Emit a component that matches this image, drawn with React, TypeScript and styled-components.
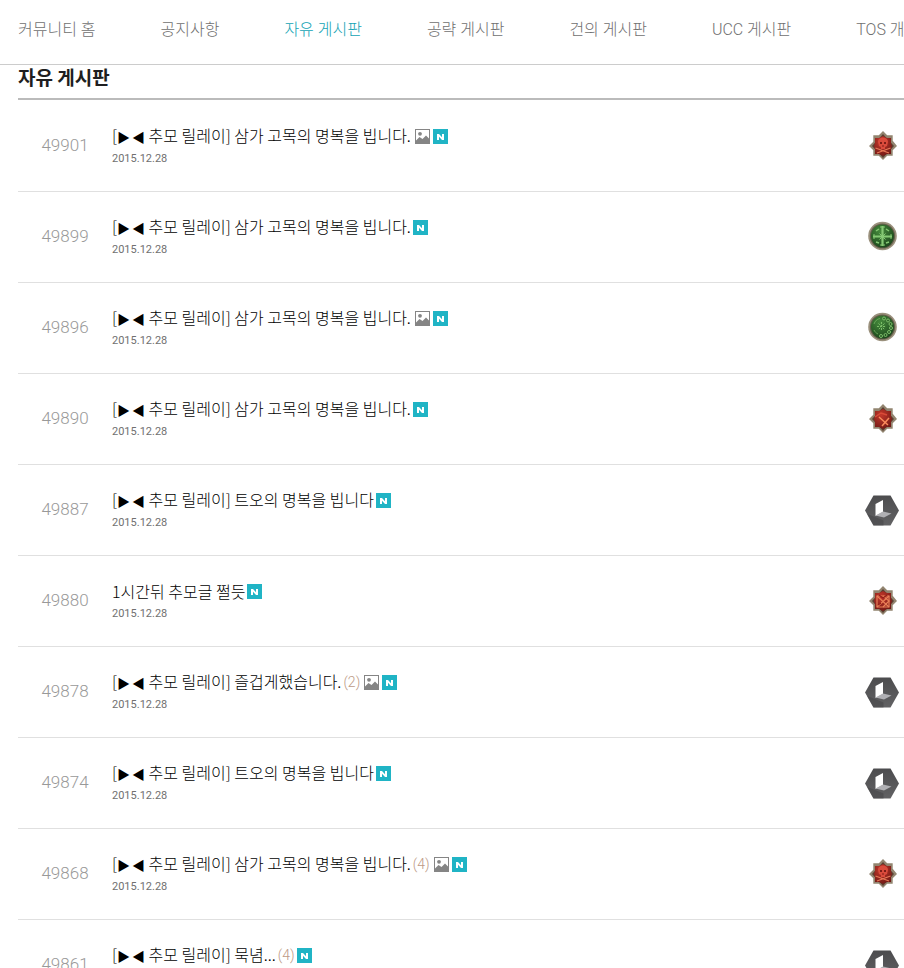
import React from "react";
import styled, { createGlobalStyle } from "styled-components";

const GlobalStyle = createGlobalStyle`
  * { box-sizing: border-box; }
  body {
    margin: 0;
    background: #fff;
    color: #1e1e20;
    font-family: Roboto, "Noto Sans CJK KR", sans-serif;
    overflow-x: hidden;
  }
`;

const korean = `"Noto Sans CJK KR", "Noto Sans", sans-serif`;

const Nav = styled.nav`
  display: flex;
  gap: 65px;
  padding: 18px 0 22px 18px;
  overflow: hidden;
  border-bottom: 1px solid #ccc;
`;

const NavLink = styled.a<{ $active?: boolean }>`
  flex: none;
  font-family: Roboto, ${korean};
  font-size: 16px;
  font-weight: 300;
  line-height: 24px;
  white-space: nowrap;
  text-decoration: none;
  color: ${(p) => (p.$active ? "#12a3b4" : "#707070")};
`;

const Board = styled.main`
  padding-left: 18px;
`;

const BoardTitle = styled.h1`
  margin: 0 0 1px;
  padding-bottom: 9px;
  border-bottom: 2px solid #bbb;
  font-family: ${korean};
  font-size: 19px;
  font-weight: 700;
  line-height: 24px;
`;

const PostList = styled.ul`
  margin: 0;
  padding: 0;
  list-style: none;
`;

const PostRow = styled.li`
  display: flex;
  align-items: center;
  height: 91px;
  padding-right: 5px;
  border-bottom: 1px solid #e0e0e0;
`;

const PostNumber = styled.span`
  flex: none;
  width: 94px;
  padding-bottom: 2px;
  text-align: center;
  font-size: 17px;
  font-weight: 300;
  line-height: 20px;
  color: #999;
`;

const PostBody = styled.div`
  flex: 1;
  min-width: 0;
`;

const TitleLine = styled.div`
  display: flex;
  align-items: center;
  gap: 2px;
  height: 26px;
`;

const PostLink = styled.a`
  font-family: ${korean};
  font-size: 16px;
  font-weight: 300;
  line-height: 26px;
  white-space: nowrap;
  text-decoration: none;
  color: #000;
`;

const Ribbon = styled.span`
  display: inline-flex;
  gap: 2px;
  font-size: 13px;
`;

const ReplyCount = styled.span`
  font-size: 14px;
  font-weight: 300;
  line-height: 24px;
  color: #bd9a86;
`;

const Badges = styled.span<{ $spaced: boolean }>`
  display: flex;
  gap: 3px;
  padding-left: ${(p) => (p.$spaced ? "2px" : "0")};
`;

const PostDate = styled.time`
  display: block;
  font-size: 11px;
  line-height: 20px;
  color: #707070;
`;

const Icon = styled.svg`
  display: block;
  flex: none;
`;

function ImageIcon() {
  return (
    <Icon width="15" height="15" viewBox="0 0 15 15" role="img" aria-label="이미지">
      <rect width="15" height="15" fill="#858585" />
      <path d="M1 1h13v8.5L11 6.5 7.5 10 4.5 8 1 11.5z" fill="#fff" />
      <circle cx="5" cy="4.8" r="1.9" fill="#858585" />
    </Icon>
  );
}

function NewIcon() {
  return (
    <Icon width="15" height="15" viewBox="0 0 15 15" role="img" aria-label="새 글">
      <rect width="15" height="15" fill="#20b4c5" />
      <path d="M4 11V5h2l3 3.3V5h2v6H9L6 7.7V11z" fill="#fff" />
    </Icon>
  );
}

const STAR = "M18 2l4.2 4.3h5.5v5.5L32 17l-4.3 4.2v5.5h-5.5L18 31l-4.2-4.3H8.3v-5.5L4 17l4.3-4.2V6.3h5.5z";

type Emblem = "skull" | "sword" | "lattice" | "cross" | "wreath" | "hex";

function EmblemIcon({ kind }: { kind: Emblem }) {
  if (kind === "hex") {
    return (
      <Icon width="34" height="34" viewBox="0 0 34 34" aria-hidden="true">
        <defs>
          <linearGradient id="stone" x1="0" y1="0" x2="0" y2="1">
            <stop offset="0" stopColor="#4c4c4e" />
            <stop offset="1" stopColor="#626264" />
          </linearGradient>
        </defs>
        <path d="M8.5 2.5h17L34 17.5l-8.5 15h-17L0 17.5z" fill="url(#stone)" />
        <path d="M10 24l8.5 3.5V32.5h-10L2 21z" fill="#424244" opacity=".5" />
        <path d="M10.5 11L18 7v12l-7.5 4z" fill="#fff" />
        <path d="M10.5 22.5l7.5-4 8.5 2-7.5 4z" fill="#b0b0b4" />
      </Icon>
    );
  }
  if (kind === "cross" || kind === "wreath") {
    return (
      <Icon width="34" height="34" viewBox="0 1 34 34" aria-hidden="true">
        <defs>
          <radialGradient id="jade" cx=".4" cy=".3" r=".75">
            <stop offset="0" stopColor="#458a3c" />
            <stop offset="1" stopColor="#1b451b" />
          </radialGradient>
        </defs>
        <circle cx="17.5" cy="17" r="14.3" fill="#9a907c" />
        <circle cx="17.5" cy="17" r="12.6" fill="#665e4c" />
        <circle cx="17.5" cy="17" r="11.5" fill="url(#jade)" />
        {kind === "cross" ? (
          <g fill="none" stroke="#86c975">
            <path d="M17.5 7v20M8 17.5h19" strokeWidth="2.2" />
            <path d="M15 8h5M15 26h5M9 15v5M26 15v5M14.5 14.5l6 6M20.5 14.5l-6 6" />
            <path d="M11 12l3-2M24 12l-3-2M11 23l3 1M24 23l-3 1" strokeWidth="1.5" />
          </g>
        ) : (
          <g fill="none" stroke="#7cbd69">
            <g strokeWidth="1">
              <circle cx="19" cy="8.5" r="1.5" />
              <circle cx="23" cy="10.5" r="1.5" />
              <circle cx="25.5" cy="14" r="1.5" />
              <circle cx="26" cy="18" r="1.5" />
              <circle cx="24" cy="22" r="1.5" />
              <circle cx="20.5" cy="25" r="1.5" />
              <circle cx="16" cy="26" r="1.5" />
            </g>
            <path d="M16.5 12v9M12 16.5h9M13.5 13.5l6 6M19.5 13.5l-6 6" strokeDasharray="2 1" />
            <path d="M9 14c1-3 3-5 6-5.5M9 20c1 2 2 3 4 4" opacity=".7" />
          </g>
        )}
      </Icon>
    );
  }
  return (
    <Icon width="34" height="34" viewBox="0 0 34 34" aria-hidden="true">
      <defs>
        <radialGradient id="ruby" cx=".4" cy=".3" r=".75">
          <stop offset="0" stopColor="#c5382b" />
          <stop offset="1" stopColor="#701915" />
        </radialGradient>
      </defs>
      <path d={STAR} fill="#928570" />
      <path d="M18 5l3.5 4h4.2v4.5L29 17l-3.3 3.5V25h-4.2L18 29l-3.5-4h-4.2v-4.5L7 17l3.3-3.5V9h4.2z" fill="#5b4032" />
      <path d="M18 7l4 2h4v5l1 3-1 3v5h-4l-4 2-4-2h-4v-5l-1-3 1-3V9h4z" fill="url(#ruby)" />
      {kind === "skull" && (
        <g>
          <path d="M13 13c0-6 10-6 10 0l-1 4-2 1v2h-4v-2l-2-1z" fill="#da4b3c" />
          <path d="M15 13h2v2h-2zM19 13h2v2h-2zM17.5 16h1v2h-1z" fill="#7d1d17" />
          <path d="M10.5 19l5.5 2 8 3M25.5 19l-5.5 2-8 3" fill="none" stroke="#e87958" strokeWidth="1.2" />
        </g>
      )}
      {kind === "sword" && (
        <g fill="none">
          <path d="M10 15l6-4 6 2" stroke="#d94b39" strokeWidth="1.5" />
          <path d="M14 15l9 8M24 16l-7 8" stroke="#f98a5c" strokeWidth="1.5" />
        </g>
      )}
      {kind === "lattice" && (
        <g fill="none" stroke="#ea8058" strokeWidth="1.2">
          <path d="M12 12h12v11H12z" />
          <path d="M12 12l12 11M24 12L12 23M18 12l6 5-6 6" />
          <path d="M14 11l4 3 4-3M13 21l3-2" stroke="#941f18" />
        </g>
      )}
    </Icon>
  );
}

const NAV_ITEMS = ["커뮤니티 홈", "공지사항", "자유 게시판", "공략 게시판", "건의 게시판", "UCC 게시판", "TOS 개발일지"];

interface Post {
  id: number;
  relay?: boolean;
  title: string;
  replies?: number;
  image?: boolean;
  emblem: Emblem;
}

const POSTS: Post[] = [
  { id: 49901, relay: true, title: "삼가 고목의 명복을 빕니다.", image: true, emblem: "skull" },
  { id: 49899, relay: true, title: "삼가 고목의 명복을 빕니다.", emblem: "cross" },
  { id: 49896, relay: true, title: "삼가 고목의 명복을 빕니다.", image: true, emblem: "wreath" },
  { id: 49890, relay: true, title: "삼가 고목의 명복을 빕니다.", emblem: "sword" },
  { id: 49887, relay: true, title: "트오의 명복을 빕니다", emblem: "hex" },
  { id: 49880, title: "1시간뒤 추모글 쩔듯", emblem: "lattice" },
  { id: 49878, relay: true, title: "즐겁게했습니다.", replies: 2, image: true, emblem: "hex" },
  { id: 49874, relay: true, title: "트오의 명복을 빕니다", emblem: "hex" },
  { id: 49868, relay: true, title: "삼가 고목의 명복을 빕니다.", replies: 4, image: true, emblem: "skull" },
  { id: 49861, relay: true, title: "묵념...", replies: 4, emblem: "hex" },
];

export default function App() {
  return (
    <>
      <GlobalStyle />
      <Nav>
        {NAV_ITEMS.map((item) => (
          <NavLink key={item} href="#" $active={item === "자유 게시판"}>
            {item}
          </NavLink>
        ))}
      </Nav>
      <Board>
        <BoardTitle>자유 게시판</BoardTitle>
        <PostList>
          {POSTS.map((post) => (
            <PostRow key={post.id}>
              <PostNumber>{post.id}</PostNumber>
              <PostBody>
                <TitleLine>
                  <PostLink href="#">
                    {post.relay && (
                      <>
                        [
                        <Ribbon>
                          <span>▶</span>
                          <span>◀</span>
                        </Ribbon>
                        {" 추모 릴레이] "}
                      </>
                    )}
                    {post.title}
                  </PostLink>
                  {post.replies && <ReplyCount>({post.replies})</ReplyCount>}
                  <Badges $spaced={!!post.image}>
                    {post.image && <ImageIcon />}
                    <NewIcon />
                  </Badges>
                </TitleLine>
                <PostDate dateTime="2015-12-28">2015.12.28</PostDate>
              </PostBody>
              <EmblemIcon kind={post.emblem} />
            </PostRow>
          ))}
        </PostList>
      </Board>
    </>
  );
}
